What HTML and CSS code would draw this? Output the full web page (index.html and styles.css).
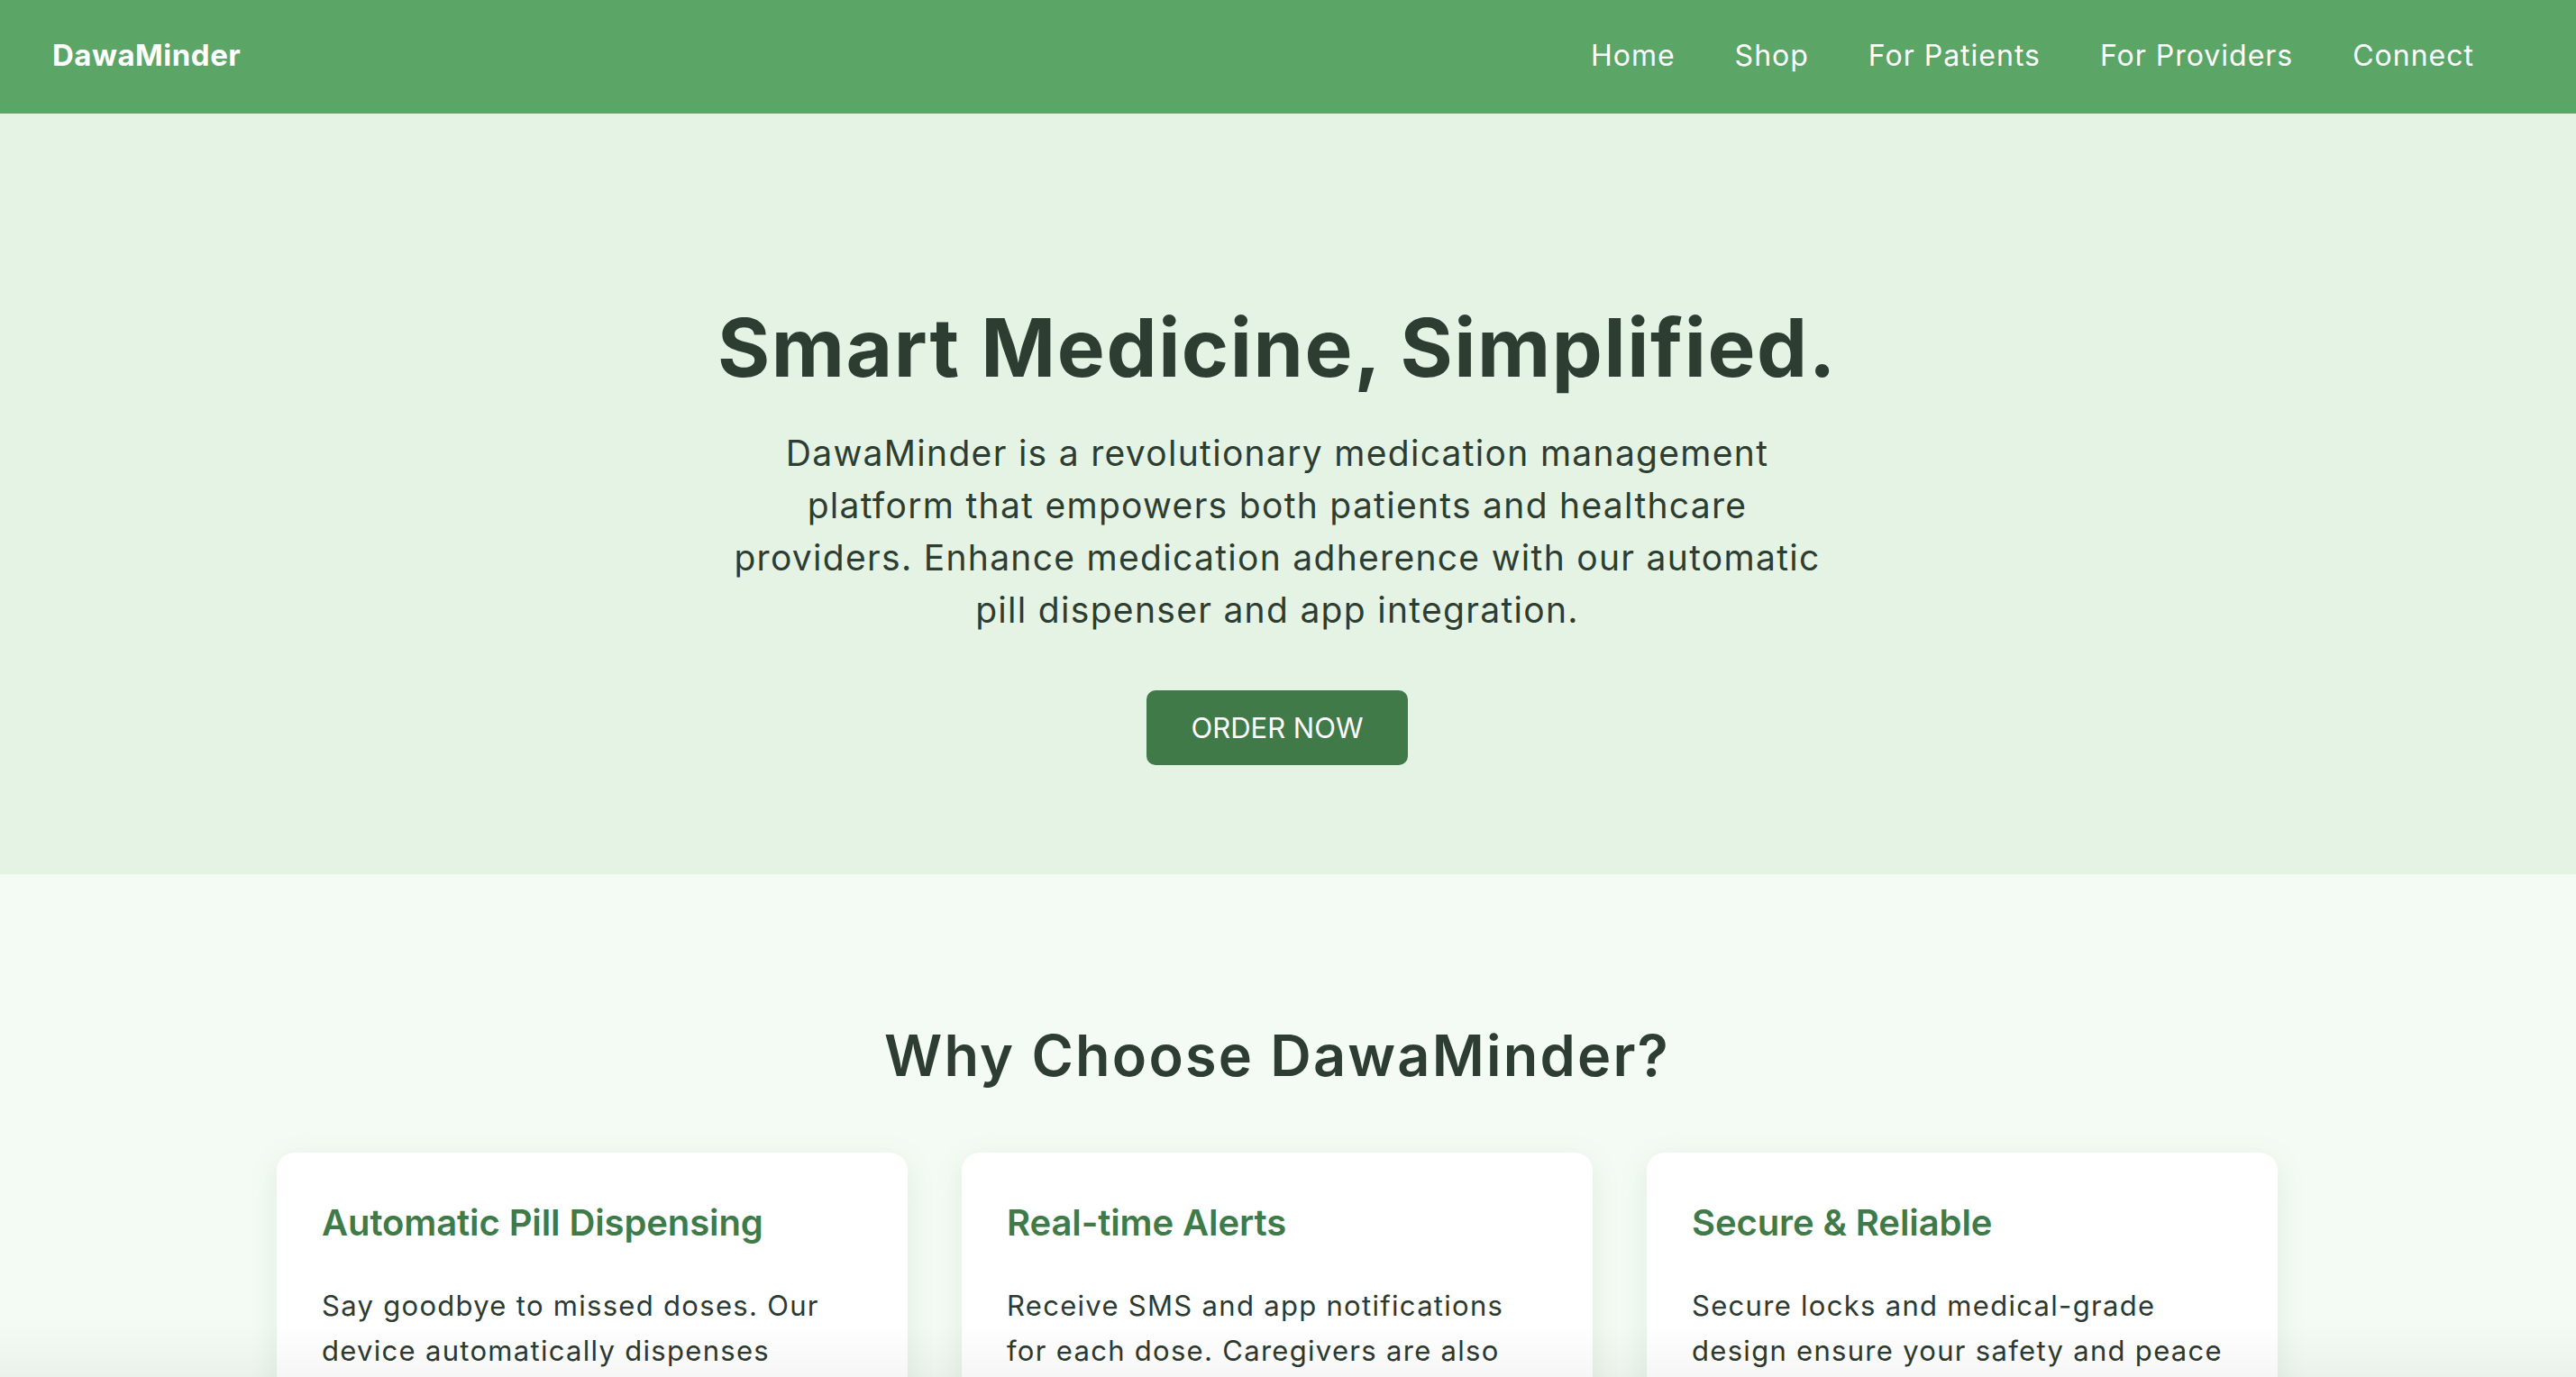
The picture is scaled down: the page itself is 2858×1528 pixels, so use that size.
FILE: index.html
```html
<!DOCTYPE html>
<html lang="en">
<head>
<meta charset="utf-8">
<title>DawaMinder</title>
<link rel="stylesheet" href="styles.css">
</head>
<body>
<nav class="topbar">
  <a class="brand" href="#">DawaMinder</a>
  <ul class="menu">
    <li><a href="#">Home</a></li>
    <li><a href="#">Shop</a></li>
    <li><a href="#">For Patients</a></li>
    <li><a href="#">For Providers</a></li>
    <li><a href="#">Connect</a></li>
  </ul>
</nav>
<main>
  <section class="hero">
    <h1 class="hero-title">Smart Medicine, Simplified.</h1>
    <p class="hero-text">DawaMinder is a revolutionary medication management platform that empowers both patients and healthcare providers. Enhance medication adherence with our automatic pill dispenser and app integration.</p>
    <a class="btn-order" href="#">ORDER NOW</a>
  </section>
  <section class="features">
    <h2 class="features-title">Why Choose DawaMinder?</h2>
    <div class="feature-grid">
      <article class="feature-card">
        <h3 class="feature-name">Automatic Pill Dispensing</h3>
        <p class="feature-text">Say goodbye to missed doses. Our device automatically dispenses medication at the right time, every time.</p>
      </article>
      <article class="feature-card">
        <h3 class="feature-name">Real-time Alerts</h3>
        <p class="feature-text">Receive SMS and app notifications for each dose. Caregivers are also notified when a dose is missed.</p>
      </article>
      <article class="feature-card">
        <h3 class="feature-name">Secure &amp; Reliable</h3>
        <p class="feature-text">Secure locks and medical-grade design ensure your safety and peace of mind, every single day.</p>
      </article>
    </div>
  </section>
</main>
<div class="bottom-fade"></div>
</body>
</html>
```

FILE: styles.css
```css
* {
  box-sizing: border-box;
}

body {
  margin: 0;
  font-family: Inter, "Noto Sans", "Open Sans", sans-serif;
  color: #2d3d31;
  background: #f4fbf4;
}

.topbar {
  height: 126px;
  background: #5ba566;
  display: flex;
  align-items: center;
  justify-content: space-between;
  padding: 0 113px 4px 58px;
}

.brand {
  color: #ffffff;
  text-decoration: none;
  font-weight: 700;
  font-size: 33px;
  letter-spacing: 0.5px;
}

.menu {
  display: flex;
  gap: 66px;
  list-style: none;
  margin: 0;
  padding: 0;
}

.menu a {
  color: #ffffff;
  text-decoration: none;
  font-size: 32px;
  font-weight: 400;
  letter-spacing: 1px;
}

.hero {
  background: #e5f3e5;
  padding: 206px 24px 121px 0;
  display: flex;
  flex-direction: column;
  align-items: center;
}

.hero-title {
  margin: 0;
  font-size: 89px;
  line-height: 107px;
  font-weight: 700;
  color: #2d3d31;
  letter-spacing: 1.6px;
}

.hero-text {
  margin: 35px 0 0;
  max-width: 1236px;
  font-size: 39px;
  line-height: 58px;
  text-align: center;
  color: #2d3d31;
  letter-spacing: 1.3px;
}

.btn-order {
  margin-top: 60px;
  height: 83px;
  padding: 0 50px;
  display: inline-flex;
  align-items: center;
  background: #417a49;
  color: #ffffff;
  border-radius: 10px;
  text-decoration: none;
  font-size: 31px;
  font-weight: 400;
}

.features {
  padding: 163px 24px 80px 0;
}

.features-title {
  margin: 0;
  text-align: center;
  font-size: 63px;
  line-height: 76px;
  font-weight: 600;
  color: #2d3d31;
  letter-spacing: 2.2px;
}

.feature-grid {
  width: 2220px;
  margin: 70px auto 0;
  display: grid;
  grid-template-columns: repeat(3, 1fr);
  gap: 60px;
}

.feature-card {
  background: #ffffff;
  border-radius: 20px;
  padding: 54px 50px 60px;
  box-shadow: 0 8px 32px rgba(70, 130, 80, 0.12);
}

.feature-name {
  margin: 0;
  font-size: 40px;
  line-height: 48px;
  font-weight: 600;
  color: #3f7b48;
  letter-spacing: -0.1px;
}

.feature-text {
  margin: 43px 0 0;
  font-size: 31px;
  line-height: 50px;
  color: #2d3a30;
  letter-spacing: 1.3px;
}

.bottom-fade {
  position: fixed;
  left: 0;
  right: 0;
  bottom: 0;
  height: 60px;
  background: linear-gradient(rgba(255, 255, 255, 0), rgba(0, 0, 0, 0.035));
  pointer-events: none;
}
```
